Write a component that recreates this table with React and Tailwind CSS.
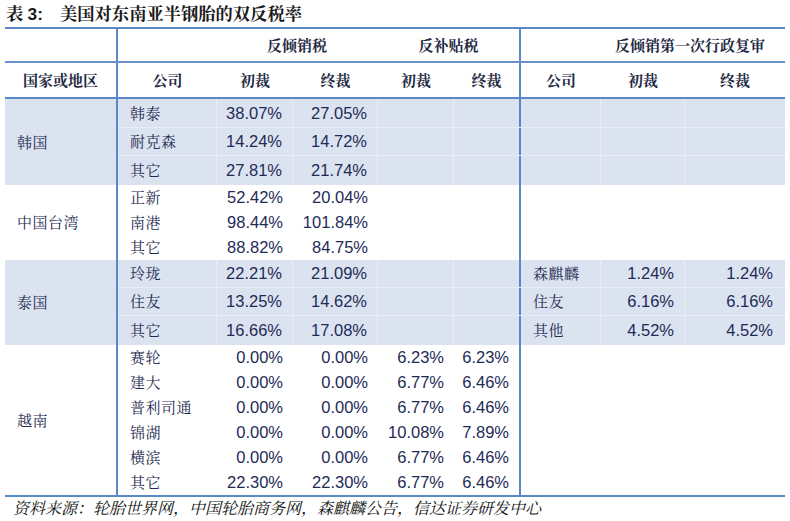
import React from "react";

const cjk = "font-['Noto_Serif_CJK_SC','Noto_Sans_CJK_SC',serif]";
const num = "font-['Liberation_Sans','Noto_Sans_CJK_SC',sans-serif]";

const blocks = [
  {
    name: "韩国",
    blue: true,
    heights: ["h-[29px]", "h-[28px]", "h-[29px]"],
    rows: [
      ["韩泰", "38.07%", "27.05%", "", "", "", "", ""],
      ["耐克森", "14.24%", "14.72%", "", "", "", "", ""],
      ["其它", "27.81%", "21.74%", "", "", "", "", ""],
    ],
  },
  {
    name: "中国台湾",
    blue: false,
    heights: ["h-[25px]", "h-[25px]", "h-[25px]"],
    rows: [
      ["正新", "52.42%", "20.04%", "", "", "", "", ""],
      ["南港", "98.44%", "101.84%", "", "", "", "", ""],
      ["其它", "88.82%", "84.75%", "", "", "", "", ""],
    ],
  },
  {
    name: "泰国",
    blue: true,
    heights: ["h-[28px]", "h-[28px]", "h-[29px]"],
    rows: [
      ["玲珑", "22.21%", "21.09%", "", "", "森麒麟", "1.24%", "1.24%"],
      ["住友", "13.25%", "14.62%", "", "", "住友", "6.16%", "6.16%"],
      ["其它", "16.66%", "17.08%", "", "", "其他", "4.52%", "4.52%"],
    ],
  },
  {
    name: "越南",
    blue: false,
    heights: ["h-[25px]", "h-[25px]", "h-[25px]", "h-[25px]", "h-[25px]", "h-[25px]"],
    rows: [
      ["赛轮", "0.00%", "0.00%", "6.23%", "6.23%", "", "", ""],
      ["建大", "0.00%", "0.00%", "6.77%", "6.46%", "", "", ""],
      ["普利司通", "0.00%", "0.00%", "6.77%", "6.46%", "", "", ""],
      ["锦湖", "0.00%", "0.00%", "10.08%", "7.89%", "", "", ""],
      ["横滨", "0.00%", "0.00%", "6.77%", "6.46%", "", "", ""],
      ["其它", "22.30%", "22.30%", "6.77%", "6.46%", "", "", ""],
    ],
  },
];

const textCols = [0, 5];
const widths = ["w-[99px]", "w-[76px]", "w-[85px]", "w-[76px]", "w-[67px]", "w-[80px]", "w-[84px]", "w-[100px]"];

function Block({ block }) {
  const bg = block.blue ? "bg-[#dce3f0]" : "bg-white";
  const n = block.rows.length;
  return (
    <div className={`flex ${bg}`}>
      <div
        className={`w-[113px] shrink-0 flex items-center pl-[12px] border-r-2 border-[#5b88c6] text-[15px] tracking-[0.5px] text-[#1f2c52] ${cjk}`}
      >
        {block.name}
      </div>
      <div className="flex flex-col">
        {block.rows.map((row, i) => (
          <div
            key={i}
            className={`flex ${block.heights[i]} ${
              block.blue && i < n - 1 ? "border-b border-[#e8edf6]" : ""
            }`}
          >
            {row.map((v, j) => {
              const right =
                j === 4
                  ? "border-r-2 border-[#5b88c6]"
                  : block.blue && j < 7
                  ? "border-r border-[#e8edf6]"
                  : "";
              const isText = textCols.includes(j);
              return (
                <div
                  key={j}
                  className={`${widths[j]} shrink-0 flex items-center ${right} ${
                    isText
                      ? `pl-[12px] ${cjk} text-[15px] tracking-[0.5px] text-[#1f2c52]`
                      : `justify-end ${j === 7 ? "pr-[12px]" : "pr-[10px]"} ${num} text-[16.5px] text-[#1e2b57]`
                  }`}
                >
                  {v}
                </div>
              );
            })}
          </div>
        ))}
      </div>
    </div>
  );
}

export default function App() {
  const head = `font-bold text-[15px] text-[#1f2a44] ${cjk}`;
  return (
    <div className="w-[790px] h-[521px] bg-white overflow-hidden">
      <div className={`h-[27px] pl-[6px] pt-[2px] text-[17.3px] font-bold text-[#1a1a1a] ${cjk} leading-[22px] flex`}>
        <span className="w-[54px] shrink-0">
          表 <span className={num}>3:</span>
        </span>
        <span>美国对东南亚半钢胎的双反税率</span>
      </div>
      <div className="ml-[5px] w-[780px] border-t-2 border-b-2 border-[#5b88c6]">
        <div className="flex h-[34px] border-b-2 border-[#6a93cb]">
          <div className="w-[113px] shrink-0 border-r-2 border-[#5b88c6]" />
          <div className={`w-[260px] shrink-0 flex items-center justify-center pl-[98px] ${head}`}>反倾销税</div>
          <div className={`w-[143px] shrink-0 flex items-center justify-center border-r-2 border-[#5b88c6] ${head}`}>
            反补贴税
          </div>
          <div className={`w-[264px] shrink-0 flex items-center justify-center pl-[74px] ${head}`}>
            反倾销第一次行政复审
          </div>
        </div>
        <div className="flex h-[36px] border-b-2 border-[#5b88c6]">
          <div className={`w-[113px] shrink-0 flex items-center justify-center border-r-2 border-[#5b88c6] ${head}`}>
            国家或地区
          </div>
          <div className={`w-[99px] shrink-0 flex items-center justify-center ${head}`}>公司</div>
          <div className={`w-[76px] shrink-0 flex items-center justify-center ${head}`}>初裁</div>
          <div className={`w-[85px] shrink-0 flex items-center justify-center ${head}`}>终裁</div>
          <div className={`w-[76px] shrink-0 flex items-center justify-center ${head}`}>初裁</div>
          <div className={`w-[67px] shrink-0 flex items-center justify-center border-r-2 border-[#5b88c6] ${head}`}>
            终裁
          </div>
          <div className={`w-[80px] shrink-0 flex items-center justify-center ${head}`}>公司</div>
          <div className={`w-[84px] shrink-0 flex items-center justify-center ${head}`}>初裁</div>
          <div className={`w-[100px] shrink-0 flex items-center justify-center ${head}`}>终裁</div>
        </div>
        {blocks.map((b) => (
          <Block key={b.name} block={b} />
        ))}
      </div>
      <div className={`pl-[13px] pt-[1px] text-[16px] italic text-[#111] ${cjk} leading-[20px]`}>
        资料来源：轮胎世界网，中国轮胎商务网，森麒麟公告，信达证券研发中心
      </div>
    </div>
  );
}
